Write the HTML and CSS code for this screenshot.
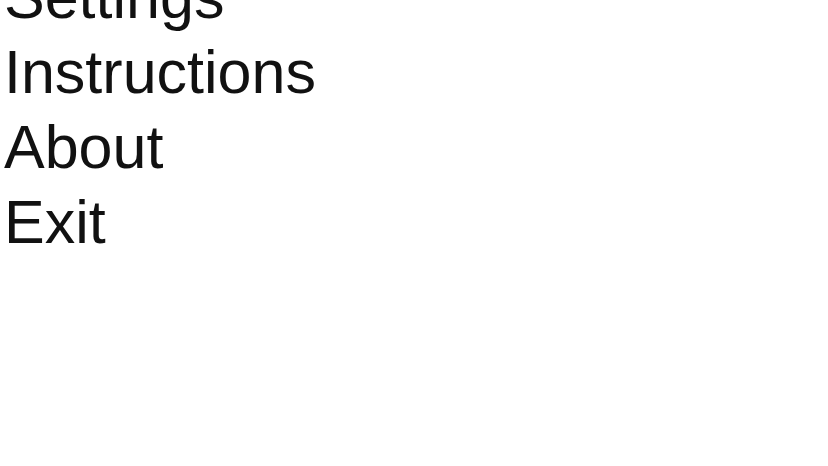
FILE: index.html
```html
<!DOCTYPE html>
<html>
<head>
<meta charset="utf-8">
<link rel="stylesheet" href="styles.css">
</head>
<body>
<ul class="menu">
  <li class="menu-item">Settings</li>
  <li class="menu-item">Instructions</li>
  <li class="menu-item">About</li>
  <li class="menu-item">Exit</li>
</ul>
</body>
</html>
```
FILE: styles.css
```css
html, body {
  margin: 0;
  padding: 0;
  background: #ffffff;
  overflow: hidden;
}
.menu {
  list-style: none;
  margin: -40px 0 0 0;
  padding: 0 0 0 4px;
  font-family: "Liberation Sans", Arial, sans-serif;
  font-size: 61px;
  line-height: 75px;
  color: #111111;
}
.menu-item {
  white-space: nowrap;
}
```
